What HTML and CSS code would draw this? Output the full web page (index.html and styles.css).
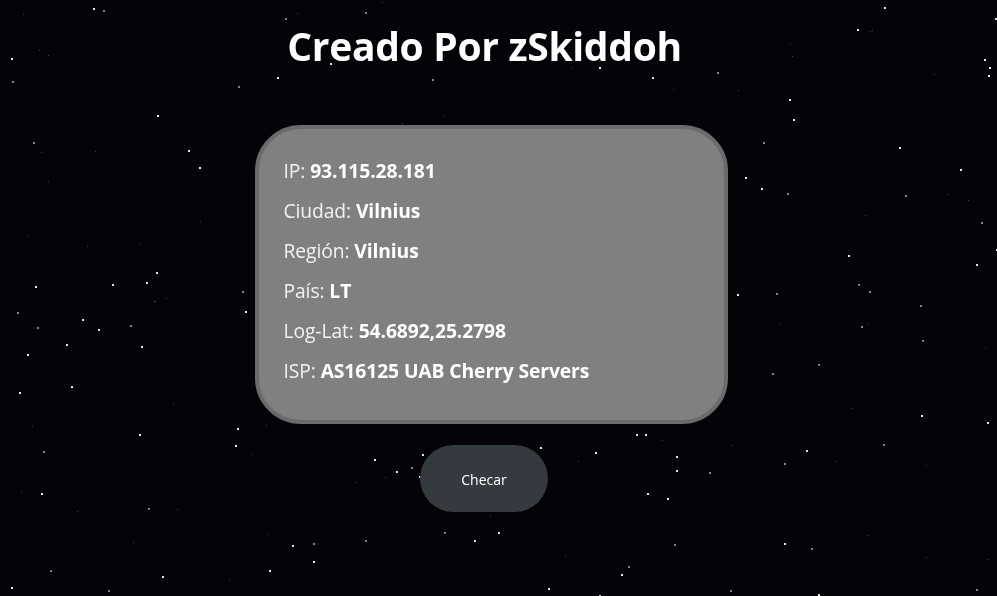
FILE: index.html
```html
<!DOCTYPE html>
<html lang="es">
<head>
<meta charset="utf-8">
<title>Creado Por zSkiddoh</title>
<link rel="stylesheet" href="styles.css">
</head>
<body>
<canvas id="stars" class="stars" width="997" height="596"></canvas>
<main class="page">
  <h1 class="title">Creado Por zSkiddoh</h1>
  <section class="card">
    <p class="row">IP: <b>93.115.28.181</b></p>
    <p class="row">Ciudad: <b>Vilnius</b></p>
    <p class="row">Región: <b>Vilnius</b></p>
    <p class="row">País: <b>LT</b></p>
    <p class="row">Log-Lat: <b>54.6892,25.2798</b></p>
    <p class="row">ISP: <b>AS16125 UAB Cherry Servers</b></p>
  </section>
  <button class="btn" type="button">Checar</button>
</main>
<script src="script.js"></script>
</body>
</html>
```

FILE: styles.css
```css
html, body {
  margin: 0;
  padding: 0;
  width: 100%;
  height: 100%;
  overflow: hidden;
  background: #040307;
}
body {
  font-family: "Open Sans", "Noto Sans", sans-serif;
  color: #f2f2f2;
}
.stars {
  position: absolute;
  left: 0;
  top: 0;
  width: 997px;
  height: 596px;
}
.page {
  position: relative;
  display: flex;
  flex-direction: column;
  align-items: center;
  width: 982px;
}
.title {
  margin: 22px 13px 0 0;
  font-size: 39px;
  font-weight: 700;
  line-height: 48px;
  color: #ffffff;
  letter-spacing: -0.3px;
}
.card {
  box-sizing: border-box;
  width: 473px;
  height: 299px;
  margin-top: 55px;
  padding: 29px 25px 25px;
  background: #808080;
  border: 4px solid #6b6b6b;
  border-radius: 46px;
}
.row {
  margin: 0 0 14px;
  font-size: 19.3px;
  line-height: 26px;
  color: #f2f2f2;
  letter-spacing: -0.1px;
}
.row b {
  font-weight: 700;
  color: #ffffff;
}
.btn {
  margin-top: 21px;
  margin-left: -14px;
  width: 128px;
  height: 67px;
  padding-top: 3px;
  border: none;
  border-radius: 34px;
  background: #343a40;
  color: #ffffff;
  font-family: "Open Sans", "Noto Sans", sans-serif;
  font-size: 14px;
}
```

FILE: script.js
```js
(function () {
  var c = document.getElementById('stars');
  var ctx = c.getContext('2d');
  var seed = 7654321;
  function rnd() {
    seed = (seed * 1103515245 + 12345) & 0x7fffffff;
    return seed / 0x7fffffff;
  }
  for (var i = 0; i < 230; i++) {
    var x = Math.floor(rnd() * 997);
    var y = Math.floor(rnd() * 596);
    var r = rnd();
    if (r < 0.4) {
      ctx.fillStyle = 'rgba(255,255,255,0.9)';
      ctx.fillRect(x, y, 2, 2);
    } else if (r < 0.65) {
      ctx.fillStyle = 'rgba(255,255,255,0.5)';
      ctx.fillRect(x, y, 2, 2);
    } else {
      ctx.fillStyle = 'rgba(255,255,255,0.25)';
      ctx.fillRect(x, y, 1, 1);
    }
  }
})();
```
